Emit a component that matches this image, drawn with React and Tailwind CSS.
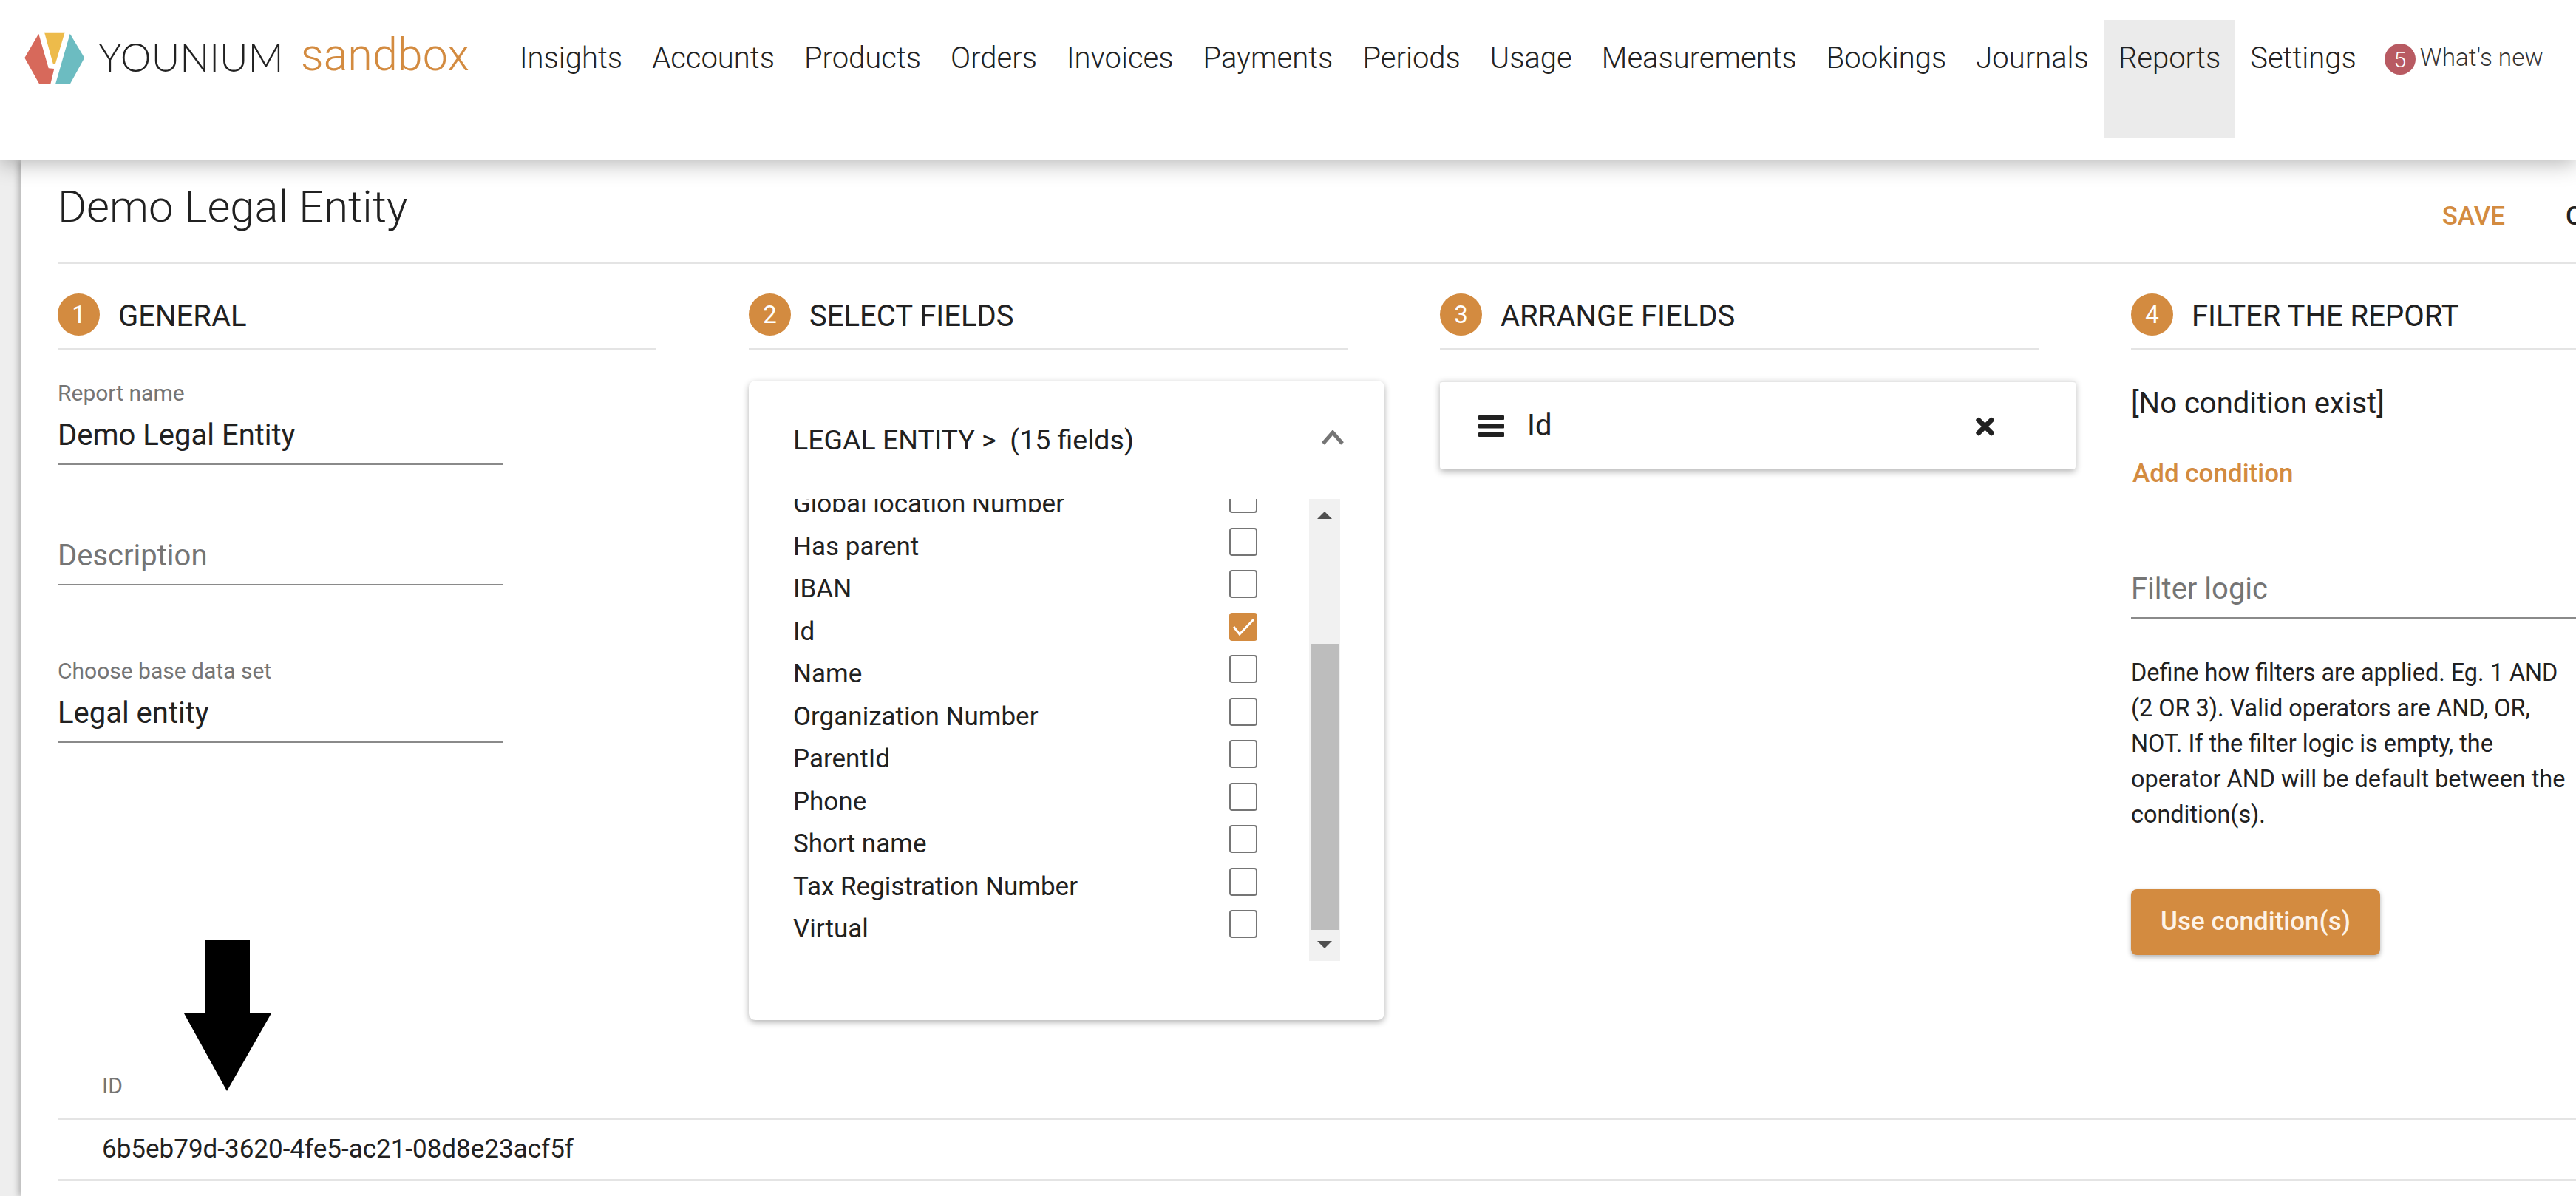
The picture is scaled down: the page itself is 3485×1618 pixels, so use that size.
import { FaTimes } from 'react-icons/fa'

const NAV_ITEMS = ['Insights', 'Accounts', 'Products', 'Orders', 'Invoices', 'Payments', 'Periods', 'Usage', 'Measurements', 'Bookings', 'Journals', 'Reports', 'Settings']

const FIELDS = [
  { name: 'Global location Number' },
  { name: 'Has parent' },
  { name: 'IBAN' },
  { name: 'Id', checked: true },
  { name: 'Name' },
  { name: 'Organization Number' },
  { name: 'ParentId' },
  { name: 'Phone' },
  { name: 'Short name' },
  { name: 'Tax Registration Number' },
  { name: 'Virtual' },
]

function Logo() {
  return (
    <svg width="82" height="72" viewBox="33 43 82 72" className="mt-[43px] ml-[33px] shrink-0">
      <polygon points="52.3,45.7 33.3,78.3 53.3,113.7 68.3,113.7 73.3,93 65.7,92.3" fill="#d7695b" />
      <polygon points="60,43.7 87.7,43.7 75,86 71.7,86" fill="#edbb4b" />
      <polygon points="94.7,45.7 114.3,78.3 94.7,113.7 75,113.7" fill="#6cbcc1" />
    </svg>
  )
}

function Header() {
  return (
    <header className="relative z-10 h-[217px] shrink-0 flex items-start bg-white shadow-[0_4px_28px_rgba(0,0,0,0.3)]">
      <Logo />
      <span className="ml-[18px] mt-[50px] font-[Lato,sans-serif] font-light text-[53px] leading-[54px] text-[#222]">YOUNIUM</span>
      <span className="ml-[23px] mt-[38px] font-light text-[61px] leading-[72px] text-[#d38b40]">sandbox</span>
      <nav className="flex ml-[48px] mt-[27px]">
        {NAV_ITEMS.map((item) => (
          <a key={item} className={`h-[160px] px-[20px] text-[40px] leading-[104px] font-light text-[#222] ${item === 'Reports' ? 'bg-[#ebebeb]' : ''}`}>
            {item}
          </a>
        ))}
      </nav>
      <div className="flex items-center mt-[59px] ml-[18px]">
        <span className="w-[42px] h-[42px] rounded-full bg-[#b85a62] text-white text-[30px] font-light flex items-center justify-center">5</span>
        <span className="ml-[6px] -mt-[4px] text-[33.3px] leading-[42px] font-light text-[#333]">What's new</span>
      </div>
    </header>
  )
}

function StepHeading({ n, title }) {
  return (
    <div className="flex items-center h-[77px] border-b-[3px] border-[#e4e4e4] pb-[17px]">
      <span className="w-[57px] h-[57px] rounded-full bg-[#d38b40] text-white text-[33px] flex items-center justify-center">{n}</span>
      <span className="ml-[25px] mt-[5px] text-[40px] text-[#212121]">{title}</span>
    </div>
  )
}

function Field({ label, value, placeholder, className = '' }) {
  return (
    <div className={`w-[602px] ${className}`}>
      {label && <div className="text-[30px] leading-[34px] text-[#757575]">{label}</div>}
      <div className={`h-[80px] flex items-center border-b-2 border-[#8a8a8a] pt-[2px] text-[40px] ${value ? 'text-[#212121]' : 'text-[#757575]'}`}>
        {value || placeholder}
      </div>
    </div>
  )
}

function Checkbox({ checked }) {
  if (checked) {
    return (
      <span className="w-[38px] h-[38px] rounded-[4px] bg-[#d38b40] shrink-0">
        <svg width="38" height="38" viewBox="0 0 38 38" fill="none" stroke="#fff" strokeWidth="3">
          <path d="M6 19 L14 29 L33 9" />
        </svg>
      </span>
    )
  }
  return <span className="w-[38px] h-[38px] rounded-[4px] border-2 border-[#757575] shrink-0" />
}

function FieldsCard() {
  return (
    <div className="relative mt-[41px] w-[860px] h-[865px] rounded-[9px] bg-white shadow-[0_3px_8px_rgba(0,0,0,0.3)] pt-[60px]">
      <div className="flex items-center h-[40px] pl-[60px]">
        <span className="text-[37.5px] text-[#212121]">LEGAL ENTITY &gt;&nbsp; (15 fields)</span>
        <svg width="30" height="20" viewBox="0 0 30 20" fill="none" stroke="#757575" strokeWidth="5" className="ml-auto mr-[55px] -mt-[6px]">
          <path d="M2 18 L15 3 L28 18" />
        </svg>
      </div>
      <div className="flex mt-[60px] h-[625px] pl-[60px]">
        <div className="w-[698px] overflow-hidden">
          <div className="-mt-[19px]">
            {FIELDS.map((f) => (
              <div key={f.name} className="flex items-start justify-between pr-[70px] h-[57.56px]">
                <span className="text-[35px] leading-[48px] mt-[2px] text-[#212121]">{f.name}</span>
                <Checkbox checked={f.checked} />
              </div>
            ))}
          </div>
        </div>
        <div className="w-[42px] bg-[#f1f1f1] flex flex-col items-center">
          <svg width="20" height="40" viewBox="0 0 20 40" className="shrink-0"><polygon points="10,17 20,27 0,27" fill="#505050" /></svg>
          <div className="mt-[156px] w-[38px] h-[387px] bg-[#bdbdbd]" />
          <svg width="20" height="42" viewBox="0 0 20 42" className="shrink-0"><polygon points="0,15 20,15 10,25" fill="#505050" /></svg>
        </div>
      </div>
    </div>
  )
}

function ArrangeCard() {
  return (
    <div className="mt-[41px] w-[860px] h-[120px] rounded-[4px] bg-white border-t-2 border-[#e6e6e6] shadow-[0_3px_10px_rgba(0,0,0,0.3)] flex items-center pl-[52px] pr-[110px]">
      <svg width="35" height="29" viewBox="0 0 35 29" fill="#212121" className="shrink-0">
        <rect y="0" width="35" height="6" rx="1" />
        <rect y="11.5" width="35" height="6" rx="1" />
        <rect y="23" width="35" height="6" rx="1" />
      </svg>
      <span className="ml-[31px] text-[40px] text-[#212121]">Id</span>
      <FaTimes className="ml-auto text-[#212121] w-[25px] h-[36px] mt-[2px]" />
    </div>
  )
}

function FilterColumn() {
  return (
    <div>
      <div className="mt-[44px] text-[40px] leading-[56px] text-[#212121]">[No condition exist]</div>
      <div className="mt-[47px] ml-[2px] text-[35px] font-medium leading-[40px] text-[#d38b40]">Add condition</div>
      <div className="mt-[109px] h-[67px] flex items-center border-b-2 border-[#8a8a8a] pb-[11px] text-[40px] text-[#757575]">Filter logic</div>
      <p className="mt-[49px] w-[600px] text-[32.4px] leading-[48px] text-[#212121]">
        Define how filters are applied. Eg. 1 AND (2 OR 3). Valid operators are AND, OR, NOT. If the filter logic is empty, the operator AND will be default between the condition(s).
      </p>
      <button className="mt-[77px] block w-[337px] h-[89px] rounded-[8px] bg-[#d38b40] text-[#fdf3e8] text-[35px] font-medium shadow-[0_3px_6px_rgba(0,0,0,0.3)]">
        Use condition(s)
      </button>
    </div>
  )
}

export default function App() {
  return (
    <div className="relative w-[3485px] h-[1618px] overflow-hidden flex flex-col bg-[#eeeeee] font-[Roboto,sans-serif]">
      <Header />
      <main className="relative flex-1 ml-[28px] bg-white pl-[50px] shadow-[-3px_0_8px_rgba(0,0,0,0.25)]">
        <div className="flex items-center h-[140px] w-[3407px] border-b-2 border-[#e4e4e4]">
          <h1 className="text-[59.7px] font-light text-[#212121] -mt-[10px]">Demo Legal Entity</h1>
          <button className="ml-auto mt-[14px] text-[35px] font-medium text-[#d38b40]">SAVE</button>
          <button className="ml-[82px] mt-[14px] mr-[-86px] w-[100px] text-left text-[35px] font-medium text-[#212121]">CLOSE</button>
        </div>

        <div className="flex gap-[125px] w-[3700px] h-[1083px] pt-[40px]">
          <div className="w-[810px] shrink-0">
            <StepHeading n="1" title="GENERAL" />
            <Field label="Report name" value="Demo Legal Entity" className="mt-[41px]" />
            <Field placeholder="Description" className="mt-[83px]" />
            <Field label="Choose base data set" value="Legal entity" className="mt-[99px]" />
          </div>
          <div className="w-[810px] shrink-0">
            <StepHeading n="2" title="SELECT FIELDS" />
            <FieldsCard />
          </div>
          <div className="w-[810px] shrink-0">
            <StepHeading n="3" title="ARRANGE FIELDS" />
            <ArrangeCard />
          </div>
          <div className="w-[810px] shrink-0">
            <StepHeading n="4" title="FILTER THE REPORT" />
            <FilterColumn />
          </div>
        </div>

        <div className="w-[3407px]">
          <div className="h-[75px] pl-[60px] border-b-[3px] border-[#e4e4e4] text-[30px] leading-[58px] text-[#757575]">ID</div>
          <div className="h-[83px] pl-[60px] border-b-[3px] border-[#e4e4e4] text-[35px] leading-[80px] text-[#212121]">6b5eb79d-3620-4fe5-ac21-08d8e23acf5f</div>
        </div>

        <svg width="120" height="205" viewBox="0 0 120 205" className="absolute left-[220px] top-[1055px]">
          <polygon points="29,0 90,0 90,99 119,99 59,204 1,99 29,99" fill="#000" />
        </svg>
      </main>
    </div>
  )
}
